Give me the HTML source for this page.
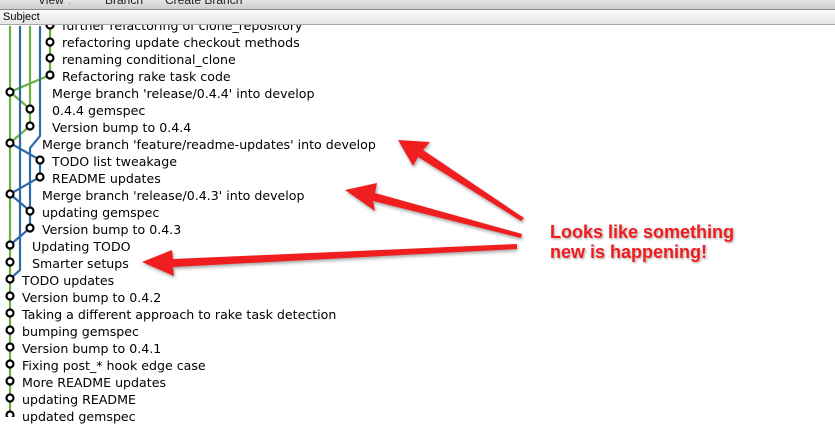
<!DOCTYPE html>
<html><head><style>
body{margin:0;width:835px;height:417px;overflow:hidden;background:#fff;font-family:"Liberation Sans",sans-serif;position:relative}
.tb{position:absolute;left:0;top:0;width:835px;height:9px;background:linear-gradient(#e4e4e4,#cfcfcf);border-bottom:1px solid #8a8a8a;overflow:hidden}
.tb span{position:absolute;top:-7px;font-size:12px;color:#222}
.hd{position:absolute;left:0;top:10px;width:835px;height:14px;background:linear-gradient(#fafafa,#e6e6e6);border-bottom:1px solid #a8a8a8;font-size:11px;line-height:14px;padding-left:3px;color:#000}
.r{position:absolute;font-family:"DejaVu Sans",sans-serif;font-size:12.6px;color:#000;white-space:nowrap;line-height:17px;margin-top:1px}
svg{position:absolute;left:0;top:0}
.note{position:absolute;left:550px;top:222px;font-weight:bold;font-size:18px;line-height:20px;color:#f0191c;text-shadow:0 0 2px #fff,1px 1px 2px #888}
</style></head><body>
<div class="tb"><span style="left:38px">View</span><span style="left:68px;color:#999">:</span><span style="left:105px">Branch</span><span style="left:165px">Create Branch</span></div>
<svg width="835" height="417" viewBox="0 0 835 417">
<g fill="none" stroke-width="2.2">
<path d="M10 26V417" stroke="#6bb040"/>
<path d="M30 26V112 M30 112V126 L10 143" stroke="#6bb040"/>
<path d="M50 26V75 L10 92 L30 109" stroke="#6bb040"/>
<path d="M20 26V270 L10 279" stroke="#2e6ba8"/>
<path d="M40 26V136 L30 148 V228 L10 245" stroke="#2e6ba8"/>
<path d="M10 143 L40 160 V177 L10 194 L30 211" stroke="#2e6ba8"/>
</g>
<g fill="#fff" stroke="#000" stroke-width="2.2">
<circle cx="50" cy="25" r="3.5"/><circle cx="50" cy="42" r="3.5"/><circle cx="50" cy="58" r="3.5"/><circle cx="50" cy="75" r="3.5"/>
<circle cx="10" cy="92" r="3.5"/><circle cx="30" cy="109" r="3.5"/><circle cx="30" cy="126" r="3.5"/>
<circle cx="10" cy="143" r="3.5"/><circle cx="40" cy="160" r="3.5"/><circle cx="40" cy="177" r="3.5"/>
<circle cx="10" cy="194" r="3.5"/><circle cx="30" cy="211" r="3.5"/><circle cx="30" cy="228" r="3.5"/>
<circle cx="10" cy="245" r="3.5"/><circle cx="10" cy="262" r="3.5"/><circle cx="10" cy="279" r="3.5"/>
<circle cx="10" cy="296" r="3.5"/><circle cx="10" cy="313" r="3.5"/><circle cx="10" cy="330" r="3.5"/>
<circle cx="10" cy="347" r="3.5"/><circle cx="10" cy="364" r="3.5"/><circle cx="10" cy="381" r="3.5"/>
<circle cx="10" cy="398" r="3.5"/><circle cx="10" cy="415" r="3.5"/>
</g>
<g fill="#f01e1e" style="filter:drop-shadow(1px 2px 1.5px rgba(0,0,0,.35))">
<polygon points="398,140 430,142 423,150 524,218 521,221 418,157 413,166"/>
<polygon points="345,190 377,183 375,193 522,234 521,238 373,201 375,211"/>
<polygon points="142,262 172,250 173,259 517,244 517,249 173,267 174,276"/>
</g>
</svg>
<div class="r" style="left:62px;top:16px">further refactoring of clone_repository</div>
<div class="r" style="left:62px;top:33px">refactoring update checkout methods</div>
<div class="r" style="left:62px;top:50px">renaming conditional_clone</div>
<div class="r" style="left:62px;top:67px">Refactoring rake task code</div>
<div class="r" style="left:52px;top:84px">Merge branch 'release/0.4.4' into develop</div>
<div class="r" style="left:52px;top:101px">0.4.4 gemspec</div>
<div class="r" style="left:52px;top:118px">Version bump to 0.4.4</div>
<div class="r" style="left:42px;top:135px">Merge branch 'feature/readme-updates' into develop</div>
<div class="r" style="left:52px;top:152px">TODO list tweakage</div>
<div class="r" style="left:52px;top:169px">README updates</div>
<div class="r" style="left:42px;top:186px">Merge branch 'release/0.4.3' into develop</div>
<div class="r" style="left:42px;top:203px">updating gemspec</div>
<div class="r" style="left:42px;top:220px">Version bump to 0.4.3</div>
<div class="r" style="left:32px;top:237px">Updating TODO</div>
<div class="r" style="left:32px;top:254px">Smarter setups</div>
<div class="r" style="left:22px;top:271px">TODO updates</div>
<div class="r" style="left:22px;top:288px">Version bump to 0.4.2</div>
<div class="r" style="left:22px;top:305px">Taking a different approach to rake task detection</div>
<div class="r" style="left:22px;top:322px">bumping gemspec</div>
<div class="r" style="left:22px;top:339px">Version bump to 0.4.1</div>
<div class="r" style="left:22px;top:356px">Fixing post_* hook edge case</div>
<div class="r" style="left:22px;top:373px">More README updates</div>
<div class="r" style="left:22px;top:390px">updating README</div>
<div class="r" style="left:22px;top:407px">updated gemspec</div>
<div class="hd" style="z-index:2">Subject</div>
<div class="note">Looks like something<br>new is happening!</div>
</body></html>
